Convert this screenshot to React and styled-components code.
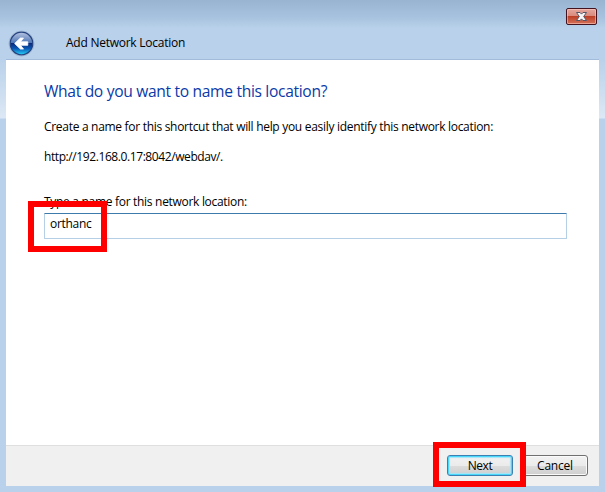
import React from 'react';
import styled, { createGlobalStyle } from 'styled-components';

const GlobalStyle = createGlobalStyle`
  * { box-sizing: border-box; }
  body { margin: 0; overflow: hidden; }
`;

const Window = styled.main`
  position: relative;
  width: 605px;
  height: 492px;
  display: grid;
  grid-template-columns: 6px 593px 6px;
  grid-template-rows: 59px 427px 6px;
  background: #b9d1ea;
  color: #000;
  font: 12px/16px "Open Sans", "Noto Sans", sans-serif;
`;

const TitleBar = styled.header`
  grid-column: 1 / -1;
  display: flex;
  flex-direction: column;
  background: linear-gradient(#99b4d1 0, #a6c2de 17px, #b9d1ea 28px);
`;

const WindowControls = styled.div`
  height: 28px;
  padding: 8px 8px 0 0;
  display: flex;
  justify-content: flex-end;
`;

const CloseButton = styled.button`
  width: 31px;
  height: 17px;
  padding: 0;
  display: grid;
  place-items: center;
  border: 1px solid #43141f;
  border-radius: 2px;
  background: linear-gradient(#e5a79d 0, #d98a7c 47%, #bd4026 50%, #d4715a 100%);
  box-shadow: inset 0 0 0 1px rgba(255, 205, 195, 0.55);
`;

const TitleRow = styled.div`
  height: 31px;
  display: flex;
  align-items: center;
  padding-left: 8px;
`;

const BackButton = styled.button`
  width: 27px;
  height: 27px;
  padding: 0;
  border: 0;
  background: none;
  svg { display: block; }
`;

const Line = styled.span`
  display: block;
  white-space: nowrap;
  letter-spacing: ${({ $track = 0 }) => $track}px;
`;

const Title = styled(Line)`
  margin: 0 0 2px 31px;
`;

const FrameSide = styled.div`
  background: linear-gradient(#b9d1ea 0, #dce8f5 59px, #b9d1ea 60px);
`;

const Dialog = styled.section`
  display: flex;
  flex-direction: column;
  background: #fff;
  border-top: 1px solid #a3bbda;
`;

const Content = styled.div`
  flex: 1;
  padding: 19px 32px 0 38px;
`;

const Heading = styled.h1`
  margin: 0;
  height: 24px;
  font-size: 15.6px;
  line-height: 24px;
  font-weight: 400;
  color: #0a3aa8;
  white-space: nowrap;
  letter-spacing: -0.32px;
`;

const Description = styled.div`
  margin-top: 16px;
  display: grid;
  gap: 14px;
`;

const Field = styled.label`
  margin-top: 29px;
  display: block;
`;

const TextInput = styled.div`
  width: 523px;
  height: 26px;
  margin-top: 3px;
  padding: 2px 5px;
  border: 1px solid #b5cfe7;
  border-top-color: #3d7bad;
  border-radius: 1px;
`;

const Footer = styled.footer`
  height: 41px;
  padding: 9px 11px 0 0;
  display: flex;
  justify-content: flex-end;
  gap: 9px;
  background: #f0f0f0;
  border-top: 1px solid #dfdfdf;
`;

const Button = styled.button`
  width: 66px;
  height: 21px;
  padding: 0;
  display: grid;
  place-items: center;
  font: inherit;
  color: #000;
  border: 1px solid ${({ $primary }) => ($primary ? '#3c7fb1' : '#707070')};
  border-radius: 3px;
  background: linear-gradient(#f2f2f2 0, #ebebeb 50%, #dddddd 50%, #cfcfcf 100%);
  box-shadow: ${({ $primary }) =>
    $primary ? 'inset 0 0 0 1px #48d8fb, inset 0 0 1px 2px #a5e4f6' : 'inset 0 0 0 1px #fafafa'};
`;

const Highlight = styled.div`
  position: absolute;
  left: ${({ $x }) => $x}px;
  top: ${({ $y }) => $y}px;
  width: ${({ $w }) => $w}px;
  height: ${({ $h }) => $h}px;
  border: 6px solid #f00;
  pointer-events: none;
`;

function BackIcon() {
  return (
    <svg width="27" height="27" viewBox="0 0 27 27">
      <defs>
        <linearGradient id="orb" x1="0" y1="0" x2="0" y2="1">
          <stop offset="0" stopColor="#b5c3e0" />
          <stop offset="0.46" stopColor="#5279b8" />
          <stop offset="0.5" stopColor="#0b2c7c" />
          <stop offset="0.72" stopColor="#0a58b4" />
          <stop offset="1" stopColor="#25d5fb" />
        </linearGradient>
      </defs>
      <circle cx="13.5" cy="13.5" r="12.5" fill="#d3e1f1" stroke="#8ea9c9" strokeWidth="0.7" />
      <circle cx="13.5" cy="13.5" r="11.3" fill="url(#orb)" stroke="#24427f" strokeWidth="1.2" />
      <path d="M6.6 13.5 12.4 8h3.1l-2.9 3.8h7.2v3.5h-7.2l2.9 3.8h-3.1z" fill="#fff" stroke="#fff" strokeWidth="0.8" strokeLinejoin="round" />
    </svg>
  );
}

function CloseIcon() {
  return (
    <svg width="13" height="11" viewBox="0 0 13 11">
      <path d="M1.5 1.5h3.5l1.5 1.6 1.5-1.6h3.5L8.7 5.5l2.8 4H8l-1.5-1.6L5 9.5H1.5l2.8-4z" fill="#f7f7f7" stroke="#535666" />
    </svg>
  );
}

export default function App() {
  return (
    <>
      <GlobalStyle />
      <Window>
        <TitleBar>
          <WindowControls>
            <CloseButton aria-label="Close"><CloseIcon /></CloseButton>
          </WindowControls>
          <TitleRow>
            <BackButton aria-label="Back"><BackIcon /></BackButton>
            <Title $track={-0.25}>Add Network Location</Title>
          </TitleRow>
        </TitleBar>
        <FrameSide />
        <Dialog>
          <Content>
            <Heading>What do you want to name this location?</Heading>
            <Description>
              <Line $track={-0.3}>Create a name for this shortcut that will help you easily identify this network location:</Line>
              <Line $track={-0.41}>http://192.168.0.17:8042/webdav/.</Line>
            </Description>
            <Field>
              <Line $track={-0.3}>Type a name for this network location:</Line>
              <TextInput><Line $track={-0.3}>orthanc</Line></TextInput>
            </Field>
          </Content>
          <Footer>
            <Button $primary><Line $track={-0.4}>Next</Line></Button>
            <Button><Line $track={-0.2}>Cancel</Line></Button>
          </Footer>
        </Dialog>
        <FrameSide />
        <Highlight $x={28} $y={201} $w={79} $h={51} />
        <Highlight $x={433} $y={442} $w={93} $h={45} />
      </Window>
    </>
  );
}
